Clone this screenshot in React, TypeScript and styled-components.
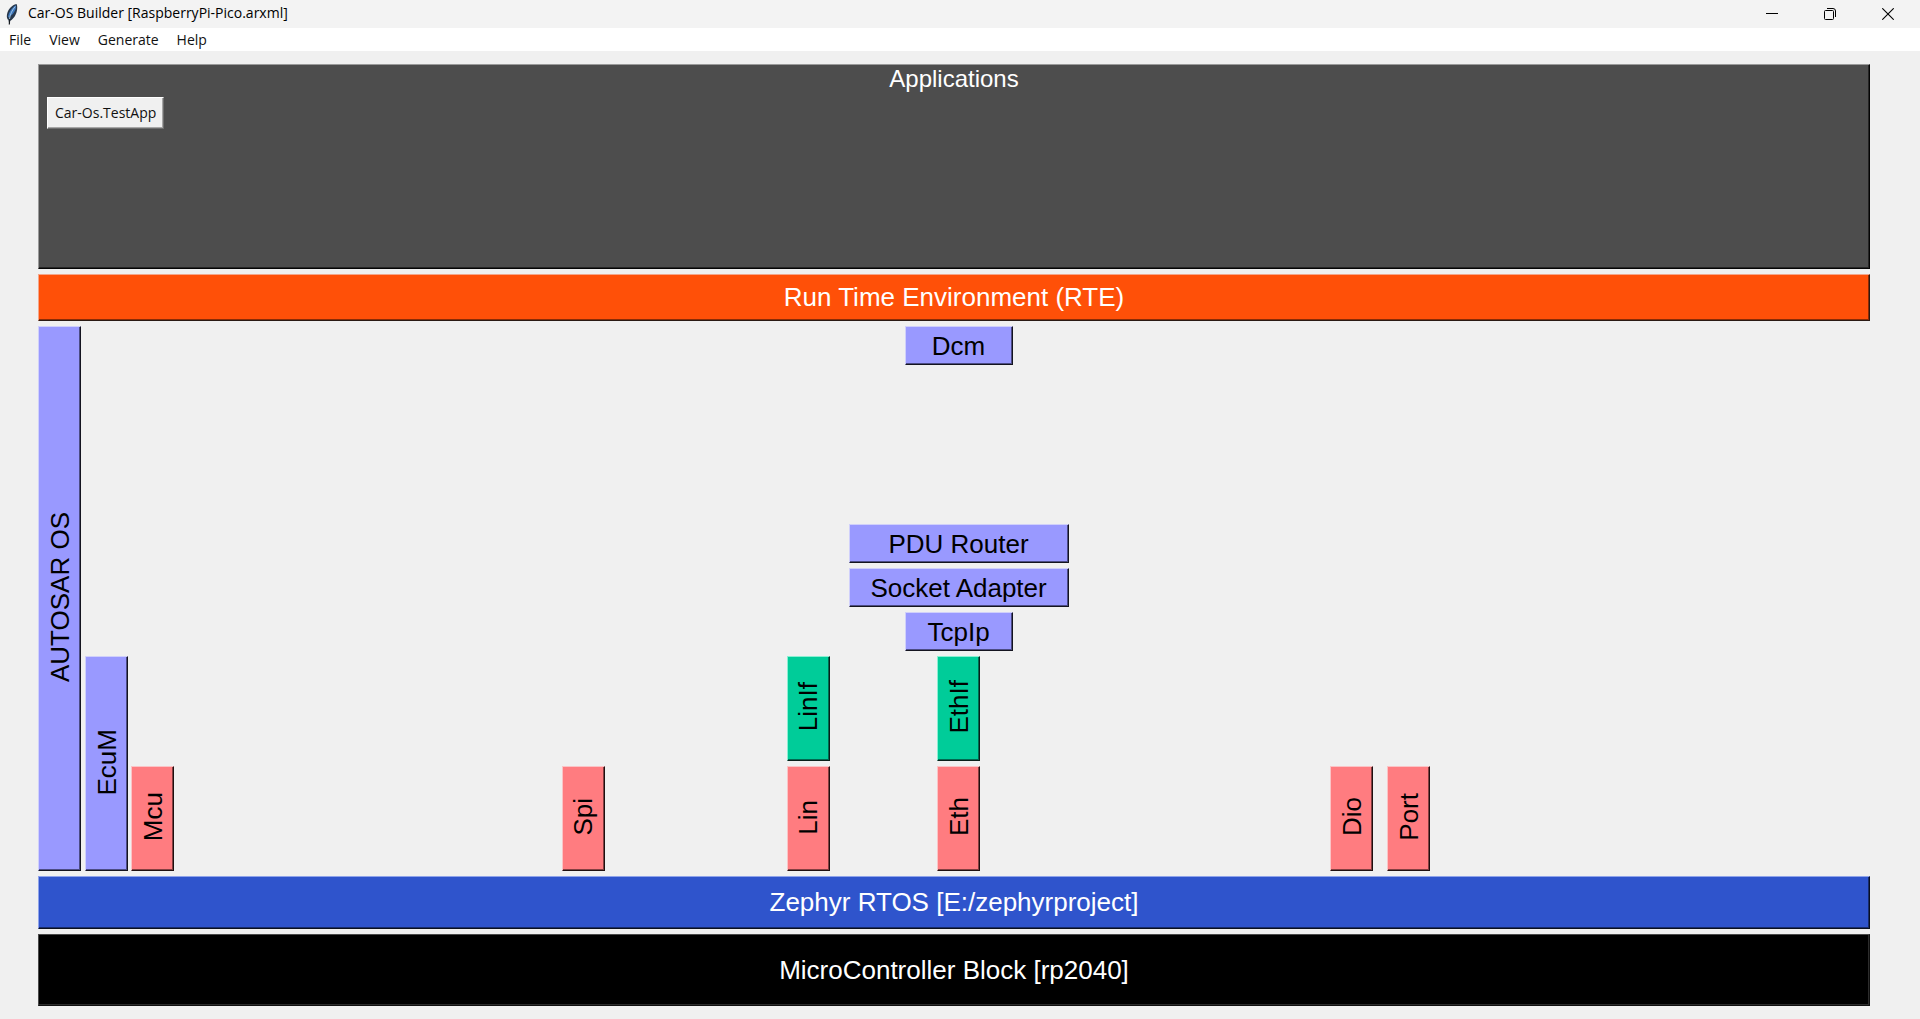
import React from "react";
import styled, { createGlobalStyle, css } from "styled-components";

const uiFont = `"Segoe UI", "Open Sans", "Noto Sans", sans-serif`;
const blockFont = `Arial, "Liberation Sans", sans-serif`;

const GlobalStyle = createGlobalStyle`
  *, *::before, *::after { box-sizing: border-box; }
  body { margin: 0; background: #f0f0f0; }
  button { margin: 0; border-radius: 0; cursor: default; }
`;

type Tone = { fill: string; light: string; shade: string; dark: string; text: string };

const tones: Record<string, Tone> = {
  apps: { fill: "#4d4d4d", light: "#9a9a9a", shade: "#262626", dark: "#050505", text: "#ffffff" },
  rte: { fill: "#ff5008", light: "#f4a68a", shade: "#8a2c06", dark: "#2a1a14", text: "#ffffff" },
  service: { fill: "#9999ff", light: "#d0d0fb", shade: "#4c4c84", dark: "#14141f", text: "#000000" },
  iface: { fill: "#00cc99", light: "#8af0d2", shade: "#006a50", dark: "#0a1f19", text: "#000000" },
  driver: { fill: "#ff7c80", light: "#fbc4c6", shade: "#843f41", dark: "#1f1010", text: "#000000" },
  rtos: { fill: "#2f54cc", light: "#8fa3ea", shade: "#182c6c", dark: "#0a1020", text: "#ffffff" },
  chip: { fill: "#000000", light: "#4a4a4a", shade: "#2c2c2c", dark: "#101010", text: "#ffffff" },
};

const raised = css<{ $tone: Tone }>`
  border: 1px solid;
  border-color: ${(p) => `${p.$tone.light} ${p.$tone.dark} ${p.$tone.dark} ${p.$tone.light}`};
  box-shadow: inset -1px -1px 0 ${(p) => p.$tone.shade};
  background: ${(p) => p.$tone.fill};
  color: ${(p) => p.$tone.text};
`;

const Window = styled.div`
  display: flex;
  flex-direction: column;
  min-height: 100vh;
`;

const TitleBar = styled.header`
  display: flex;
  align-items: center;
  height: 28px;
  padding: 0 3px 0 5px;
  background: #f3f3f3;
  color: #000;
  font-family: ${uiFont};
`;

const Title = styled.h1`
  flex: 1;
  margin: 0 0 0 9px;
  font-size: 14px;
  font-weight: 400;
  line-height: 26px;
  height: 28px;
`;

const CaptionButton = styled.button`
  display: flex;
  align-items: center;
  justify-content: center;
  width: 58px;
  height: 26px;
  padding: 0;
  border: 0;
  background: transparent;
`;

const MenuBar = styled.nav`
  display: flex;
  height: 23px;
  background: #fff;
`;

const MenuButton = styled.button`
  padding: 0 9px;
  border: 0;
  background: transparent;
  color: #111;
  font-family: ${uiFont};
  font-size: 14px;
  line-height: 23px;
`;

const Stack = styled.main`
  display: flex;
  flex: 1;
  flex-direction: column;
  gap: 5px;
  padding: 13px 50px 13px 38px;
  font-family: ${blockFont};
`;

const AppsPanel = styled.section<{ $tone: Tone }>`
  ${raised}
  min-height: 205px;
  padding: 0 8px;
`;

const AppsHeading = styled.h2`
  margin: 0 0 4px;
  font-size: 24px;
  font-weight: 400;
  line-height: 28px;
  text-align: center;
`;

const AppButton = styled.button`
  height: 32px;
  padding: 0 7px 2px;
  border: 1px solid;
  border-color: #fff #6e6e6e #6e6e6e #fff;
  box-shadow: inset -1px -1px 0 #a6a6a6;
  background: #f0f0f0;
  color: #111;
  font-family: ${uiFont};
  font-size: 14px;
`;

const LayerButton = styled.button<{ $tone: Tone; $height: number }>`
  ${raised}
  height: ${(p) => p.$height}px;
  padding: 0;
  font-family: ${blockFont};
  font-size: 26px;
`;

const ModuleGrid = styled.section`
  display: grid;
  flex: 1;
  grid-template-columns:
    [os] 43px 4px [ecum] 43px 3px [mcu] 43px 388fr
    [spi] 43px 182fr [lin] 43px 19px [stack] 220px 262fr
    [dio] 43px 14px [port] 43px 440fr;
  grid-template-rows:
    [dcm] 39px minmax(39px, 1fr) [pdur] 39px [soad] 39px
    [tcpip] 39px [iface] 105px [driver] 105px [end];
  row-gap: 5px;
`;

const Module = styled.button<{
  $tone: Tone;
  $column: string;
  $from: string;
  $to?: string;
  $width: number;
}>`
  ${raised}
  grid-column: ${(p) => p.$column};
  grid-row: ${(p) => p.$from} / ${(p) => p.$to ?? "auto"};
  justify-self: center;
  width: ${(p) => p.$width}px;
  padding: 0;
  font-family: ${blockFont};
  font-size: 26px;
  line-height: 32px;
  white-space: nowrap;
`;

const VerticalLabel = styled.span`
  display: block;
  margin: 0 auto;
  padding-top: 3px;
  line-height: 38px;
  writing-mode: vertical-rl;
  transform: rotate(180deg);
`;

type ModuleSpec = {
  name: string;
  tone: Tone;
  column: string;
  from: string;
  to?: string;
  width?: number;
};

const modules: ModuleSpec[] = [
  { name: "AUTOSAR OS", tone: tones.service, column: "os", from: "dcm", to: "end" },
  { name: "EcuM", tone: tones.service, column: "ecum", from: "iface", to: "end" },
  { name: "Mcu", tone: tones.driver, column: "mcu", from: "driver" },
  { name: "Spi", tone: tones.driver, column: "spi", from: "driver" },
  { name: "LinIf", tone: tones.iface, column: "lin", from: "iface" },
  { name: "Lin", tone: tones.driver, column: "lin", from: "driver" },
  { name: "Dcm", tone: tones.service, column: "stack", from: "dcm", width: 108 },
  { name: "PDU Router", tone: tones.service, column: "stack", from: "pdur", width: 220 },
  { name: "Socket Adapter", tone: tones.service, column: "stack", from: "soad", width: 220 },
  { name: "TcpIp", tone: tones.service, column: "stack", from: "tcpip", width: 108 },
  { name: "EthIf", tone: tones.iface, column: "stack", from: "iface" },
  { name: "Eth", tone: tones.driver, column: "stack", from: "driver" },
  { name: "Dio", tone: tones.driver, column: "dio", from: "driver" },
  { name: "Port", tone: tones.driver, column: "port", from: "driver" },
];

const FeatherIcon = () => (
  <svg width="14" height="22" viewBox="0 0 14 22" aria-hidden="true">
    <path d="M11.500 1C7 2 2.600 6.500 1.900 12c-.3 2.500.2 4 1.600 5.300L4.200 21l1-3.300C9 16 11.500 11 12.100 6.500 12.400 4 12.200 2 11.500 1z" fill="#28384c" />
    <path d="M10.800 2.300C6.800 5 3.600 9 3 14.500 6 13.500 10 9 11 5z" fill="#3d78bd" />
    <path d="M10.300 3.500C7.500 6.500 5 11 4.300 17" fill="none" stroke="#a9c9e8" strokeWidth="0.900" />
    <path d="M4.700 16 4.300 21.500" stroke="#15191e" strokeWidth="1.200" />
  </svg>
);

const MinimizeIcon = () => (
  <svg width="12" height="12" viewBox="0 0 12 12" aria-hidden="true">
    <path d="M0 5.500h12" stroke="#000" />
  </svg>
);

const RestoreIcon = () => (
  <svg width="12" height="12" viewBox="0 0 12 12" fill="none" stroke="#000" aria-hidden="true">
    <rect x="0.500" y="2.500" width="9" height="9" rx="1" />
    <path d="M3 .5h6A2.500 2.500 0 0 1 11.500 3v6" />
  </svg>
);

const CloseIcon = () => (
  <svg width="12" height="12" viewBox="0 0 12 12" stroke="#000" strokeWidth="1.100" aria-hidden="true">
    <path d="M.3.3l11.400 11.400M11.700.3.3 11.700" />
  </svg>
);

export default function App() {
  return (
    <Window>
      <GlobalStyle />
      <TitleBar>
        <FeatherIcon />
        <Title>Car-OS Builder [RaspberryPi-Pico.arxml]</Title>
        <CaptionButton aria-label="Minimize"><MinimizeIcon /></CaptionButton>
        <CaptionButton aria-label="Restore"><RestoreIcon /></CaptionButton>
        <CaptionButton aria-label="Close"><CloseIcon /></CaptionButton>
      </TitleBar>
      <MenuBar>
        {["File", "View", "Generate", "Help"].map((name) => (
          <MenuButton key={name}>{name}</MenuButton>
        ))}
      </MenuBar>
      <Stack>
        <AppsPanel $tone={tones.apps}>
          <AppsHeading>Applications</AppsHeading>
          <AppButton>Car-Os.TestApp</AppButton>
        </AppsPanel>
        <LayerButton $tone={tones.rte} $height={47}>Run Time Environment (RTE)</LayerButton>
        <ModuleGrid>
          {modules.map((m) => (
            <Module
              key={m.name}
              $tone={m.tone}
              $column={m.column}
              $from={m.from}
              $to={m.to}
              $width={m.width ?? 43}
            >
              {m.width ? m.name : <VerticalLabel>{m.name}</VerticalLabel>}
            </Module>
          ))}
        </ModuleGrid>
        <LayerButton $tone={tones.rtos} $height={53}>Zephyr RTOS [E:/zephyrproject]</LayerButton>
        <LayerButton $tone={tones.chip} $height={72}>MicroController Block [rp2040]</LayerButton>
      </Stack>
    </Window>
  );
}
